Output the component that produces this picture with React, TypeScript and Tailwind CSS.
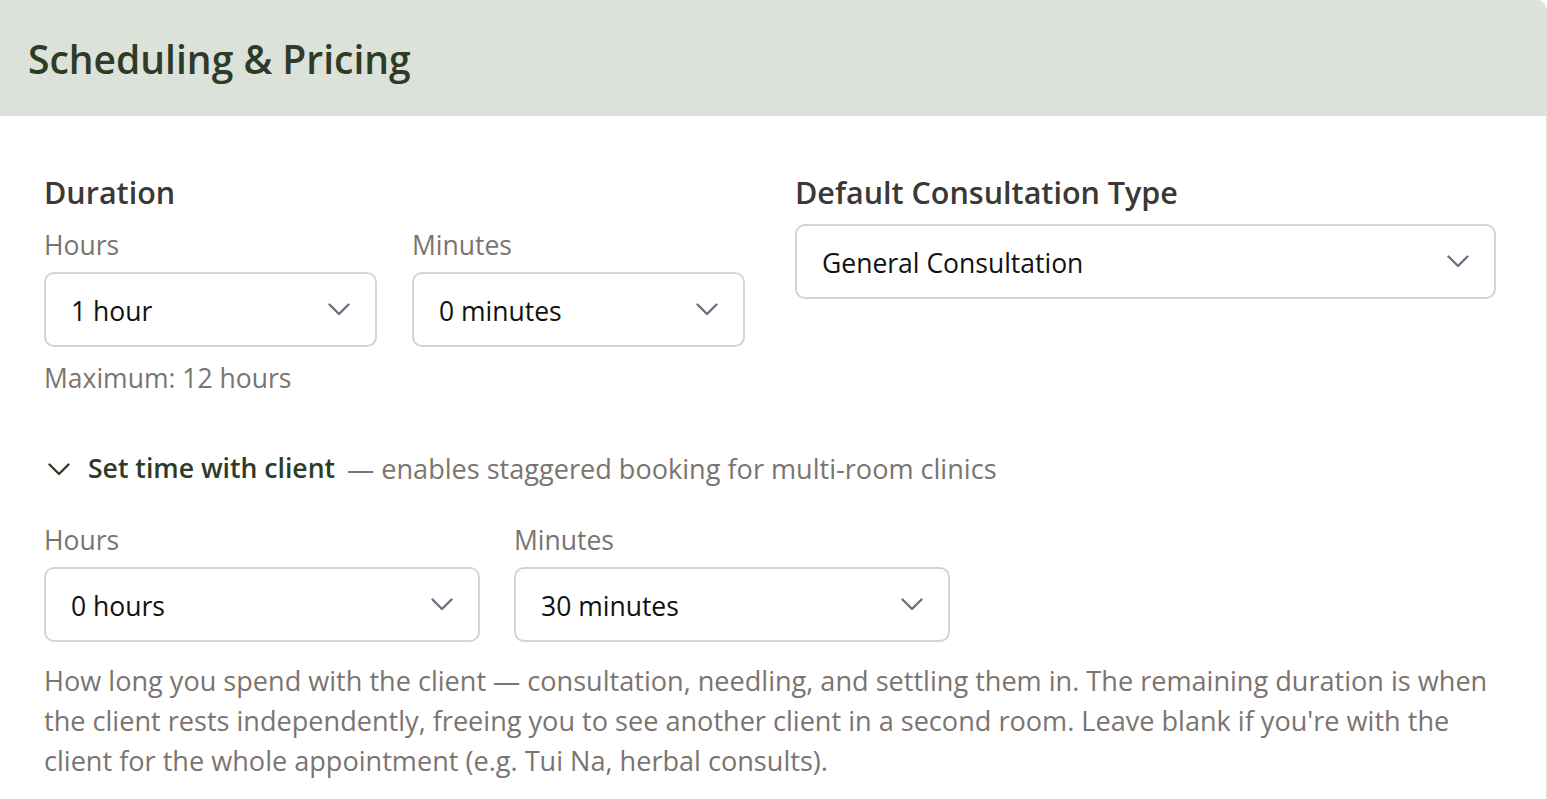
function Chevron({ className = "" }: { className?: string }) {
  return (
    <svg viewBox="0 0 22 13" className={className} fill="none" stroke="currentColor" strokeWidth={2.4} strokeLinecap="round" strokeLinejoin="round">
      <polyline points="1.5 1.5 11 11 20.5 1.5" />
    </svg>
  );
}

function Select({ value, className = "" }: { value: string; className?: string }) {
  return (
    <div
      className={`flex h-[75px] items-center justify-between rounded-[10px] border-2 border-[#d8d3cf] bg-white pl-[25px] pr-[25px] ${className}`}
    >
      <span className="pt-[3px] text-[26.5px] leading-none text-[#111111]">{value}</span>
      <Chevron className="h-[13px] w-[22px] text-[#6b7280]" />
    </div>
  );
}

function Label({ children }: { children: React.ReactNode }) {
  return <div className="text-[26.5px] leading-[36px] text-[#7b7470]">{children}</div>;
}

export default function App() {
  return (
    <div
      className="min-h-screen bg-white"
      style={{ fontFamily: '"Open Sans", "Noto Sans", sans-serif' }}
    >
      <div className="w-[1547px] overflow-hidden rounded-tr-[10px] border-r border-[#e2dfdc] bg-white">
        <div className="flex h-[116px] items-center bg-[#dce1d9] pl-[28px]">
          <h1 className="text-[39px] font-semibold leading-none text-[#2d3b27]">Scheduling &amp; Pricing</h1>
        </div>

        <div className="pl-[44px] pr-[50px] pt-[56px] pb-[40px]">
          <div className="flex gap-[50px]">
            <div className="w-[701px]">
              <h2 className="text-[30.5px] font-semibold leading-[40px] text-[#3b3835]">Duration</h2>
              <div className="mt-[15px] flex gap-[35px]">
                <div className="w-[333px]">
                  <Label>Hours</Label>
                  <Select value="1 hour" className="mt-[9px]" />
                </div>
                <div className="w-[333px]">
                  <Label>Minutes</Label>
                  <Select value="0 minutes" className="mt-[9px]" />
                </div>
              </div>
              <div className="mt-[13px] text-[26.5px] leading-[36px] text-[#7b7470]">Maximum: 12 hours</div>
            </div>

            <div className="flex-1">
              <h2 className="text-[30.5px] font-semibold leading-[40px] text-[#3b3835]">Default Consultation Type</h2>
              <Select value="General Consultation" className="mt-[12px]" />
            </div>
          </div>

          <div className="mt-[53px] flex h-[40px] items-center">
            <Chevron className="ml-[4px] h-[13px] w-[22px] text-[#2d3b27]" />
            <span className="ml-[18px] text-[26.6px] font-semibold text-[#2d3b27]">Set time with client</span>
            <span className="ml-[12px] text-[27.1px] text-[#7b7470]">— enables staggered booking for multi-room clinics</span>
          </div>

          <div className="mt-[33px] flex gap-[34px]">
            <div className="w-[436px]">
              <Label>Hours</Label>
              <Select value="0 hours" className="mt-[9px]" />
            </div>
            <div className="w-[436px]">
              <Label>Minutes</Label>
              <Select value="30 minutes" className="mt-[9px]" />
            </div>
          </div>

          <p className="mt-[19px] text-[27.1px] leading-[40px] text-[#7b7470]">
            How long you spend with the client — consultation, needling, and settling them in. The remaining duration is
            when the client rests independently, freeing you to see another client in a second room. Leave blank if
            you're with the client for the whole appointment (e.g. Tui Na, herbal consults).
          </p>
        </div>
      </div>
    </div>
  );
}
